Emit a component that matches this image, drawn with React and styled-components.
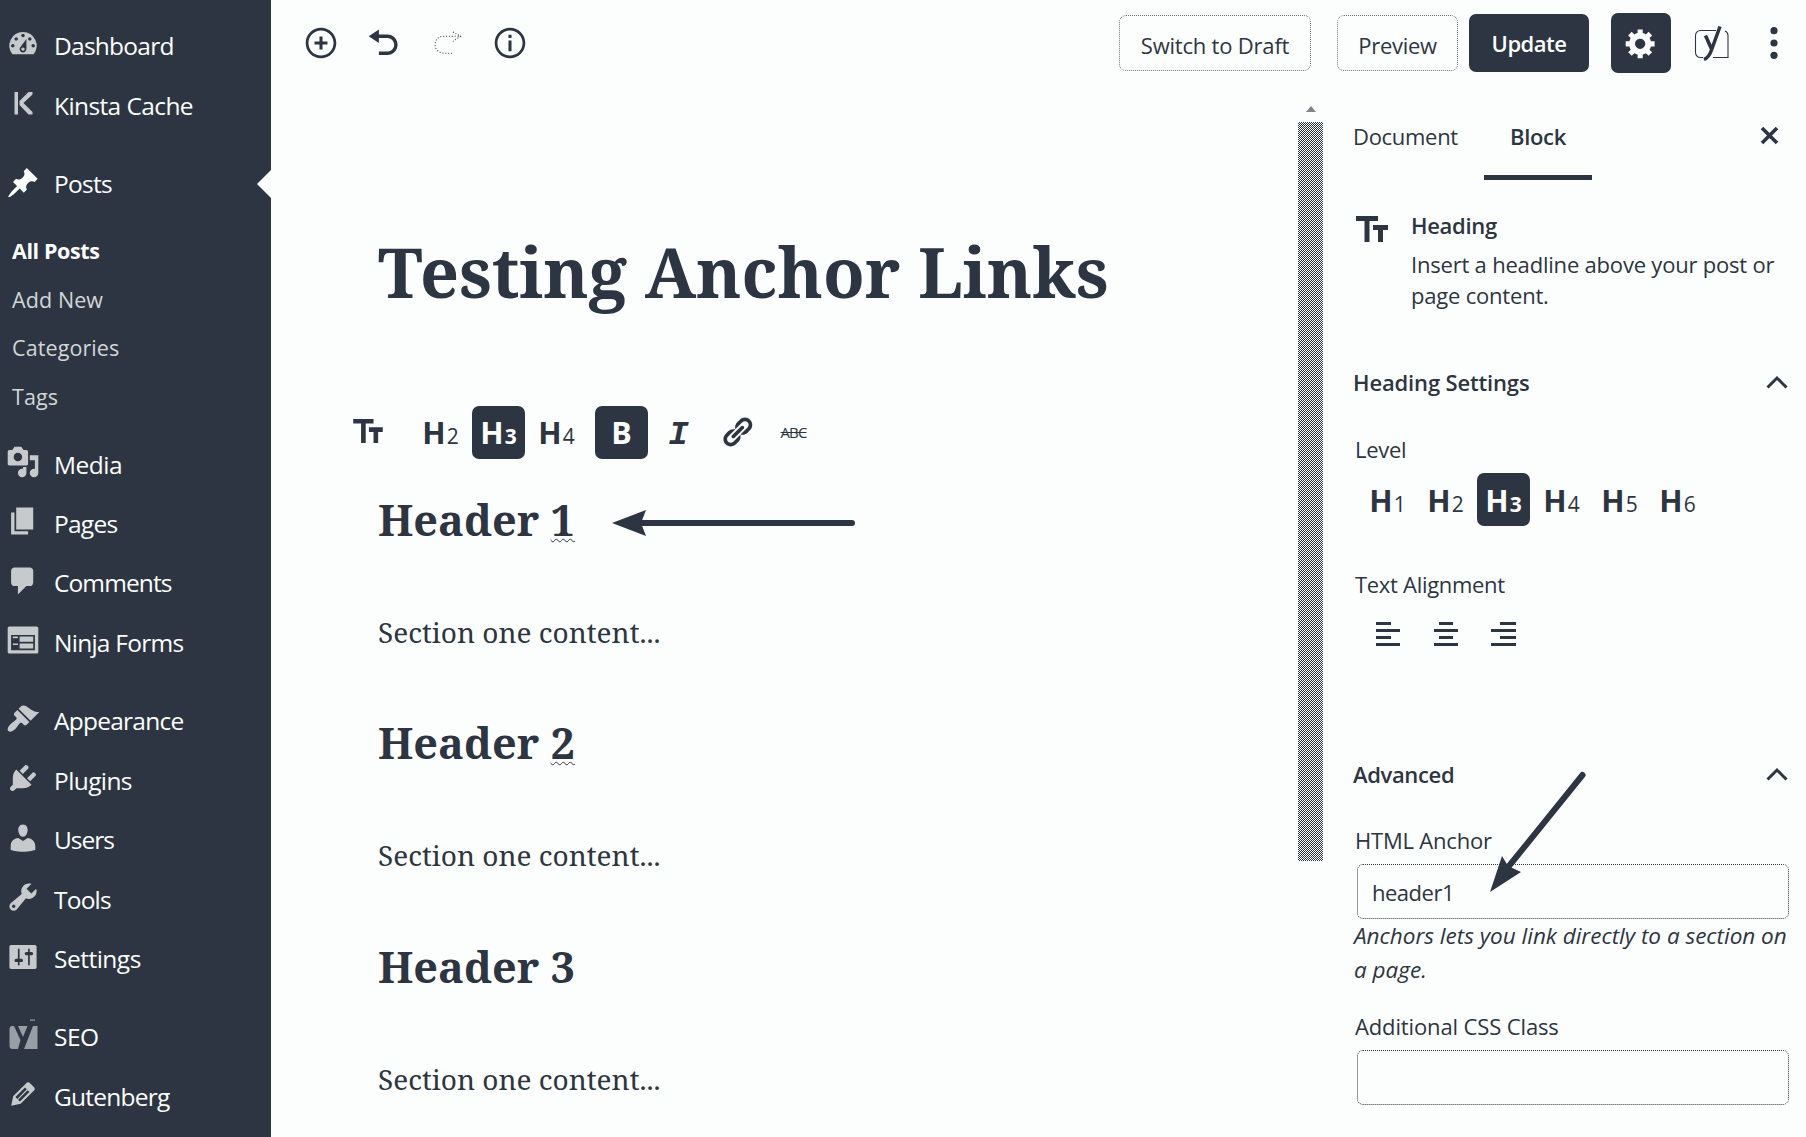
import React from "react";
import styled, { createGlobalStyle } from "styled-components";

const INK = "#2c3541";
const PAPER = "#fcfefd";
const SANS = `"Open Sans", "Noto Sans", sans-serif`;
const SERIF = `"Noto Serif", "Droid Serif", "DejaVu Serif Condensed", "DejaVu Serif", serif`;

const GlobalStyle = createGlobalStyle`
  * { box-sizing: border-box; }
  body { margin: 0; background: ${PAPER}; }
  button { font: inherit; color: inherit; background: none; border: 0; padding: 0; }
`;

const Page = styled.div`
  display: flex;
  width: 1806px;
  height: 1137px;
  overflow: hidden;
  position: relative;
  background: ${PAPER};
  color: ${INK};
  font-family: ${SANS};
`;

/* ---------- Admin menu ---------- */

const Sidebar = styled.nav`
  width: 271px;
  flex: none;
  padding-top: 16px;
  background: ${INK};
  color: ${PAPER};
`;

const MenuGroup = styled.div`
  margin-bottom: 19px;
`;

const MenuItem = styled.div`
  display: flex;
  align-items: center;
  height: 59.450px;
  padding-left: 5.5px;
  font-size: 24.5px;
  letter-spacing: ${(p) => p.$track ?? -0.75}px;
  white-space: nowrap;
`;

const MenuIcon = styled.svg`
  width: 34px;
  height: 34px;
  flex: none;
  margin: ${(p) => (p.$active ? -2 : -4)}px 14.5px 0 0;
  fill: ${(p) => (p.$active ? PAPER : p.$dim ? "#989ea5" : "#c6cacd")};
`;

const Pointer = styled.span`
  margin-left: auto;
  border: 14px solid transparent;
  border-left-width: 0;
  border-right-color: ${PAPER};
`;

const Submenu = styled.div`
  padding: 14px 0 13px;
`;

const SubItem = styled.div`
  height: 48.5px;
  line-height: 48.5px;
  padding-left: 12px;
  font-size: 21.5px;
  letter-spacing: ${(p) => (p.$current ? -0.4 : 0.1)}px;
  font-weight: ${(p) => (p.$current ? 700 : 400)};
  color: ${(p) => (p.$current ? PAPER : "#d3d6d9")};
`;

/* ---------- Top bar ---------- */

const Workspace = styled.div`
  flex: 1;
  display: flex;
  flex-direction: column;
  min-width: 0;
`;

const TopBar = styled.header`
  display: flex;
  align-items: center;
  height: 87px;
  padding: 0 22px 1px 32.5px;
`;

const Tools = styled.div`
  display: flex;
  gap: 29px;
  margin-right: auto;
`;

const ToolIcon = styled.svg`
  width: 34px;
  height: 34px;
  fill: ${(p) => (p.$faded ? "none" : INK)};
  stroke: ${(p) => (p.$faded ? INK : "none")};
`;

const BarButton = styled.button`
  width: ${(p) => p.$w}px;
  height: ${(p) => (p.$primary ? 58 : 56)}px;
  margin-right: ${(p) => p.$after}px;
  padding-top: ${(p) => (p.$primary ? 0 : 3)}px;
  border: ${(p) => (p.$primary ? "0" : `1px dotted #6d747d`)};
  border-radius: 7px;
  background: ${(p) => (p.$primary ? INK : "transparent")};
  color: ${(p) => (p.$primary ? PAPER : INK)};
  font-size: 22px;
  font-weight: ${(p) => (p.$primary ? 600 : 400)};
  letter-spacing: ${(p) => p.$track}px;
  white-space: nowrap;
`;

const GearButton = styled.button`
  display: grid;
  place-items: center;
  width: 60px;
  height: 60px;
  border-radius: 7px;
  background: ${INK};
  margin-right: 20px;
  svg { width: 34px; height: 34px; fill: ${PAPER}; }
`;

const MoreIcon = styled.svg`
  width: 20px;
  height: 34px;
  margin-left: 31px;
  fill: ${INK};
`;

/* ---------- Editor canvas ---------- */

const Body = styled.div`
  flex: 1;
  display: flex;
  min-height: 0;
`;

const Canvas = styled.main`
  width: 1027px;
  flex: none;
  padding: 135px 0 0 107px;
  font-family: ${SERIF};
`;

const Title = styled.h1`
  margin: 0;
  font-size: 68.200px;
  line-height: 100px;
  font-weight: 700;
  white-space: nowrap;
`;

const BlockToolbar = styled.div`
  display: flex;
  align-items: center;
  height: 52px;
  margin: 84px 0 32px -25px;
`;

const BlockType = styled.span`
  width: 61px;
  height: 27px;
`;

const ToggleBox = styled.span`
  display: flex;
  align-items: ${(p) => (p.$middle ? "center" : "baseline")};
  justify-content: center;
  gap: 1px;
  width: 53px;
  height: 53px;
  margin-right: ${(p) => p.$after ?? 5}px;
  border-radius: 7px;
  background: ${(p) => (p.$on ? INK : "transparent")};
  color: ${(p) => (p.$on ? PAPER : INK)};
  font-family: ${SANS};
  font-size: 30.5px;
  line-height: ${(p) => p.$line ?? 52}px;
  font-weight: 700;
`;

const LevelDigit = styled.span`
  font-size: 21px;
  font-weight: ${(p) => (p.$on ? 700 : 400)};
`;

const ItalicGlyph = styled.span`
  font-family: "Liberation Mono", monospace;
  font-style: italic;
  font-weight: 700;
  font-size: 34px;
  line-height: 58px;
`;

const StrikeGlyph = styled.span`
  font-size: 15px;
  font-weight: 400;
  letter-spacing: -0.9px;
  text-decoration: line-through;
`;

const Section = styled.section`
  height: 223.3px;
`;

const SectionHeading = styled.h3`
  margin: 0;
  height: 60px;
  font-size: 43.200px;
  line-height: 60px;
  font-weight: 700;
`;

const Misspelled = styled.span`
  text-decoration: ${(p) => (p.$on ? `underline wavy ${INK} 1px` : "none")};
  text-underline-offset: 2px;
  text-decoration-skip-ink: none;
`;

const Paragraph = styled.p`
  margin: 62px 0 0;
  font-size: 28px;
  line-height: 40px;
`;

const Scrollbar = styled.div`
  width: 25px;
  flex: none;
  display: flex;
  flex-direction: column;
  align-items: center;
  padding-top: 19px;
`;

const ScrollArrow = styled.span`
  border: 5px solid transparent;
  border-top-width: 0;
  border-bottom: 6px solid #7d848c;
`;

const ScrollThumb = styled.span`
  width: 25px;
  height: 739px;
  margin-top: 10px;
  background: conic-gradient(${INK} 25%, ${PAPER} 0 50%, ${INK} 0 75%, ${PAPER} 0) 0 0 / 2px 2px;
`;

/* ---------- Settings panel ---------- */

const Panel = styled.aside`
  flex: 1;
  padding: 0 17px 0 30px;
`;

const Tabs = styled.div`
  display: flex;
  height: 93px;
  font-size: 22px;
`;

const Tab = styled.span`
  width: ${(p) => p.$w}px;
  padding-top: 29px;
  line-height: 40px;
  text-align: ${(p) => (p.$active ? "center" : "left")};
  font-weight: ${(p) => (p.$active ? 600 : 400)};
  letter-spacing: -0.3px;
  border-bottom: ${(p) => (p.$active ? `5px solid ${INK}` : "0")};
`;

const CloseIcon = styled.svg`
  width: 19px;
  height: 19px;
  margin: 39px 10px 0 auto;
`;

const BlockCard = styled.div`
  display: flex;
  gap: 23px;
  padding: 29px 0 0 3px;
  height: 166px;
`;

const CardIcon = styled.div`
  padding-top: 7px;
`;

const CardName = styled.div`
  font-size: 22px;
  line-height: 32px;
  font-weight: 600;
  letter-spacing: -0.3px;
`;

const CardText = styled.div`
  margin-top: 8px;
  font-size: 22px;
  line-height: 31px;
  white-space: nowrap;
  letter-spacing: -0.2px;
`;

const SectionBar = styled.div`
  display: flex;
  align-items: center;
  justify-content: space-between;
  height: 40px;
  margin-top: ${(p) => p.$before}px;
  padding-right: 1px;
  font-size: 22px;
  font-weight: 600;
  letter-spacing: ${(p) => p.$track ?? -0.2}px;
`;

const FieldLabel = styled.div`
  margin: ${(p) => p.$before}px 0 0 2px;
  font-size: 22px;
  line-height: 30px;
  letter-spacing: ${(p) => p.$track ?? -0.3}px;
`;

const LevelRow = styled.div`
  display: flex;
  margin: 9px 0 0 8px;
`;

const AlignRow = styled.div`
  display: flex;
  gap: 32.5px;
  margin: 23px 0 0 23px;
`;

const TextField = styled.div`
  width: 432px;
  height: 55px;
  margin: ${(p) => p.$before}px 0 0 4px;
  padding-left: 14px;
  border: 1px dotted ${INK};
  border-radius: 6px;
  font-size: 22px;
  line-height: 54px;
  letter-spacing: -0.5px;
`;

const Hint = styled.div`
  margin-left: 1px;
  font-size: 22.5px;
  line-height: 34px;
  font-style: italic;
  white-space: nowrap;
`;

const Annotation = styled.svg`
  position: absolute;
  left: ${(p) => p.$x}px;
  top: ${(p) => p.$y}px;
  fill: ${INK};
  stroke: ${INK};
`;

const ICONS = {
  dashboard: "M3.76 16h12.48A7.998 7.998 0 0 0 10 3a7.998 7.998 0 0 0-6.24 13zM10 4c.55 0 1 .45 1 1s-.45 1-1 1-1-.45-1-1 .45-1 1-1zM6 6c.55 0 1 .45 1 1s-.45 1-1 1-1-.45-1-1 .45-1 1-1zm8 0c.55 0 1 .45 1 1s-.45 1-1 1-1-.45-1-1 .45-1 1-1zm-5.37 5.55L12 7v6c0 1.1-.9 2-2 2s-2-.9-2-2c0-.57.24-1.08.63-1.45zM4 10c.55 0 1 .45 1 1s-.45 1-1 1-1-.45-1-1 .45-1 1-1zm12 0c.55 0 1 .45 1 1s-.45 1-1 1-1-.45-1-1 .45-1 1-1zm-5 3c0-.55-.45-1-1-1s-1 .45-1 1 .45 1 1 1 1-.45 1-1z",
  pin: "M10.44 3.02l1.82-1.82 6.36 6.35-1.83 1.82c-1.05-.68-2.48-.57-3.41.36l-.75.75c-.92.93-1.04 2.35-.35 3.41l-1.83 1.82-2.41-2.41-2.8 2.79c-.42.42-3.38 2.71-3.8 2.29s1.86-3.39 2.28-3.81l2.79-2.79L4.1 9.36l1.83-1.82c1.05.69 2.48.57 3.4-.36l.75-.75c.93-.92 1.05-2.35.36-3.41z",
  media: "M13 11V4c0-.55-.45-1-1-1h-1.67L9 1H5L3.67 3H2c-.55 0-1 .45-1 1v7c0 .55.45 1 1 1h10c.55 0 1-.45 1-1zM7 4.5c1.38 0 2.5 1.12 2.5 2.5S8.38 9.5 7 9.5 4.5 8.38 4.5 7 5.62 4.5 7 4.5zM14 6h5v10.5c0 1.38-1.12 2.5-2.5 2.5S14 17.88 14 16.5s1.12-2.5 2.5-2.5c.17 0 .34.02.5.05V9h-3V6zm-4 8.05V13h2v3.5c0 1.38-1.12 2.5-2.5 2.5S7 17.88 7 16.5 8.12 14 9.5 14c.17 0 .34.02.5.05z",
  page: "M6 15V2h10v13H6zm-1 1h8v2H3V5h2v11z",
  comments: "M5 2h9c1.1 0 2 .9 2 2v7c0 1.1-.9 2-2 2h-2l-5 5v-5H5c-1.1 0-2-.9-2-2V4c0-1.1.9-2 2-2z",
  form: "M2 2h16c.55 0 1 .45 1 1v14c0 .55-.45 1-1 1H2c-.55 0-1-.45-1-1V3c0-.55.45-1 1-1zm15 14V7H3v9h14zM4 8v1h3V8H4zm4 0v3h8V8H8zm-4 4v1h3v-1H4zm4 0v3h8v-3H8z",
  brush: "M14.48 11.06L7.41 3.99l1.5-1.5c.5-.56 2.3-.47 3.51.32 1.21.8 1.43 1.28 2.91 2.1 1.18.64 2.45 1.26 4.45.85zm-.71.71L6.7 4.7 4.93 6.47c-.39.39-.39 1.02 0 1.41l1.06 1.06c.39.39.39 1.03 0 1.42-.6.6-1.43 1.11-2.21 1.69-.35.26-.7.53-1.01.84C1.43 14.23.4 16.08 1.4 17.07c.99 1 2.84-.03 4.18-1.36.31-.31.58-.66.85-1.02.57-.78 1.08-1.61 1.69-2.21.39-.39 1.02-.39 1.41 0l1.06 1.06c.39.39 1.02.39 1.41 0z",
  plug: "M13.11 4.36L9.87 7.6 8 5.73l3.24-3.24c.35-.34 1.05-.2 1.56.32.52.51.66 1.21.31 1.55zm-8 1.77l.91-1.12 9.01 9.01-1.19.84c-.71.71-2.63 1.16-3.82 1.16H6.14L4.9 17.26c-.59.59-1.54.59-2.12 0-.59-.58-.59-1.53 0-2.12l1.24-1.24v-3.88c0-1.13.4-3.19 1.09-3.89zm7.26 3.97l3.24-3.24c.34-.35 1.04-.21 1.55.31.52.51.66 1.21.31 1.55l-3.24 3.25z",
  user: "M10 9.25c-2.27 0-2.73-3.44-2.73-3.44C7 4.02 7.82 2 9.97 2c2.16 0 2.98 2.02 2.71 3.81 0 0-.41 3.44-2.68 3.44zm0 2.57L12.72 10c2.39 0 4.52 2.33 4.52 4.53v2.49s-3.65 1.13-7.24 1.13c-3.65 0-7.24-1.13-7.24-1.13v-2.49c0-2.25 1.94-4.48 4.47-4.48z",
  wrench: "M16.68 9.77c-1.34 1.34-3.3 1.67-4.95.99l-5.41 6.52c-.99.99-2.59.99-3.58 0s-.99-2.59 0-3.57l6.52-5.42c-.68-1.65-.35-3.61.99-4.95 1.28-1.28 3.12-1.62 4.72-1.06l-2.89 2.89 2.82 2.82 2.86-2.87c.53 1.58.18 3.39-1.08 4.65zM3.81 16.21c.4.39 1.04.39 1.43 0 .4-.4.4-1.04 0-1.43-.39-.4-1.03-.4-1.43 0-.39.39-.39 1.03 0 1.43z",
  sliders: "M18 16V4c0-.55-.45-1-1-1H3c-.55 0-1 .45-1 1v12c0 .55.45 1 1 1h14c.55 0 1-.45 1-1zM8 11h1c.55 0 1 .45 1 1s-.45 1-1 1H8v1.5c0 .28-.22.5-.5.5s-.5-.22-.5-.5V13H6c-.55 0-1-.45-1-1s.45-1 1-1h1V5.5c0-.28.22-.5.5-.5s.5.22.5.5V11zm5-2h-1c-.55 0-1-.45-1-1s.45-1 1-1h1V5.5c0-.28.22-.5.5-.5s.5.22.5.5V7h1c.55 0 1 .45 1 1s-.45 1-1 1h-1v5.5c0 .28-.22.5-.5.5s-.5-.22-.5-.5V9z",
  pencil: "M13.89 3.39l2.71 2.72c.46.46.42 1.24.03 1.64l-8.01 8.02-5.56 1.16 1.16-5.58s7.6-7.63 7.99-8.03c.39-.39 1.22-.39 1.68.07zm-2.73 2.79l-5.59 5.61 1.11 1.11 5.54-5.65zm-2.97 8.23l5.58-5.6-1.07-1.08-5.59 5.6z",
  insert: "M10 1c-5 0-9 4-9 9s4 9 9 9 9-4 9-9-4-9-9-9zm0 16.4c-4.1 0-7.4-3.3-7.4-7.4s3.3-7.4 7.4-7.4 7.4 3.3 7.4 7.4-3.3 7.4-7.4 7.4zm.9-11.2H9.1v2.9H6.2v1.8h2.9v2.9h1.8v-2.9h2.9V9.1h-2.9z",
  undo: "M12 5H7V2L1 6l6 4V7h5c2.2 0 4 1.8 4 4s-1.8 4-4 4H7v2h5c3.3 0 6-2.7 6-6s-2.7-6-6-6z",
  info: "M10 1c-5 0-9 4-9 9s4 9 9 9 9-4 9-9-4-9-9-9zm0 16.4c-4.1 0-7.4-3.3-7.4-7.4s3.3-7.4 7.4-7.4 7.4 3.3 7.4 7.4-3.3 7.4-7.4 7.4zM9.1 5.2h1.8V7H9.1zm0 3.3h1.8v6.3H9.1z",
  gear: "M18 12h-2.18c-.17.7-.44 1.35-.81 1.93l1.54 1.54-2.1 2.1-1.54-1.54c-.58.36-1.23.63-1.91.79V19H8v-2.18c-.68-.16-1.33-.43-1.91-.79l-1.54 1.54-2.12-2.12 1.54-1.54c-.36-.58-.63-1.23-.79-1.91H1V9.03h2.17c.16-.7.44-1.35.8-1.94L2.43 5.55l2.1-2.1 1.54 1.54c.58-.37 1.24-.64 1.93-.81V2h3v2.18c.68.16 1.33.43 1.91.79l1.54-1.54 2.12 2.12-1.54 1.54c.36.59.64 1.24.8 1.94H18V12zm-8.5 1.5c1.66 0 3-1.34 3-3s-1.34-3-3-3-3 1.34-3 3 1.34 3 3 3z",
  link: "M17.74 2.76c1.68 1.69 1.68 4.41 0 6.1l-1.53 1.52c-1.12 1.12-2.7 1.47-4.14 1.09l2.62-2.61.76-.77.76-.76c.84-.84.84-2.2 0-3.04-.84-.85-2.2-.85-3.04 0l-.77.76-3.38 3.38c-.37-1.44-.02-3.02 1.1-4.14l1.52-1.53c1.69-1.68 4.42-1.68 6.1 0zM8.59 13.43l5.34-5.34c.42-.42.42-1.1 0-1.52-.44-.43-1.13-.39-1.53 0l-5.33 5.34c-.42.42-.42 1.1 0 1.52.44.43 1.13.39 1.52 0zm-.76 2.29l4.14-4.15c.38 1.44.03 3.02-1.09 4.14l-1.52 1.53c-1.69 1.68-4.41 1.68-6.1 0-1.68-1.68-1.68-4.42 0-6.1l1.53-1.52c1.12-1.12 2.7-1.47 4.14-1.1l-4.14 4.15c-.85.84-.85 2.2 0 3.05.84.84 2.2.84 3.04 0z",
};

function MenuGlyph({ name, active }) {
  if (name === "kinsta") {
    return (
      <MenuIcon viewBox="0 0 34 34">
        <path d="M8.500 6h3.500v22.500H8.500zM22.500 6H26.500v2.500L17.500 17l9 9v2.500h-4L13.500 19v-4z" />
      </MenuIcon>
    );
  }
  if (name === "yoast") {
    return (
      <MenuIcon viewBox="0 0 34 34" $dim>
        <path d="M6.5 8H8l6.5 14L12 31H6.500a3 3 0 0 1-3-3V11a3 3 0 0 1 3-3zM12 8h9.500L17 19zM27 8h4.500v23H18z" />
        <path d="M24 1.500h5v1.200h-5z" />
      </MenuIcon>
    );
  }
  return (
    <MenuIcon viewBox="0 0 20 20" $active={active}>
      <path fillRule="evenodd" d={ICONS[name]} />
    </MenuIcon>
  );
}

const TypeIcon = ({ w = 32, h = 26 }) => (
  <svg width={w} height={h} viewBox="0 0 32 26" fill={INK}>
    <path d="M0 0h22v5h-8.5v21h-5V5H0z" />
    <path d="M17 9h15v5h-5v12h-5V14h-5z" />
  </svg>
);

const Chevron = () => (
  <svg width="22" height="16" viewBox="0 0 22 16" fill="none" stroke={INK} strokeWidth="3">
    <path d="M1.5 13.5L11 4l9.5 9.500" />
  </svg>
);

const ALIGN_BARS = {
  left: [[0, 15], [0, 24], [0, 15], [0, 24]],
  center: [[5, 14], [0, 24], [5, 14], [0, 24]],
  right: [[9, 16], [0, 25], [9, 16], [0, 25]],
};

const AlignIcon = ({ side }) => (
  <svg width="25" height="24" viewBox="0 0 25 24" fill={INK}>
    {ALIGN_BARS[side].map(([x, w], i) => (
      <rect key={i} x={x} y={i * 7} width={w} height="3" />
    ))}
  </svg>
);

const Level = ({ n, on, ...rest }) => (
  <ToggleBox $on={on} {...rest}>
    H<LevelDigit $on={on}>{n}</LevelDigit>
  </ToggleBox>
);

const MENU = [
  [
    { icon: "dashboard", label: "Dashboard" },
    { icon: "kinsta", label: "Kinsta Cache", track: -0.6 },
  ],
  [
    {
      icon: "pin",
      label: "Posts",
      active: true,
      children: ["All Posts", "Add New", "Categories", "Tags"],
    },
    { icon: "media", label: "Media", track: -0.5 },
    { icon: "page", label: "Pages" },
    { icon: "comments", label: "Comments", track: -0.9 },
    { icon: "form", label: "Ninja Forms" },
  ],
  [
    { icon: "brush", label: "Appearance" },
    { icon: "plug", label: "Plugins", track: -0.6 },
    { icon: "user", label: "Users", track: -1 },
    { icon: "wrench", label: "Tools", track: -0.8 },
    { icon: "sliders", label: "Settings", track: -0.5 },
  ],
  [
    { icon: "yoast", label: "SEO", track: -0.5 },
    { icon: "pencil", label: "Gutenberg" },
  ],
];

export default function App() {
  return (
    <>
      <GlobalStyle />
      <Page>
        <Sidebar>
          {MENU.map((group, g) => (
            <MenuGroup key={g}>
              {group.map((item) => (
                <React.Fragment key={item.label}>
                  <MenuItem $track={item.track}>
                    <MenuGlyph name={item.icon} active={item.active} />
                    {item.label}
                    {item.active && <Pointer />}
                  </MenuItem>
                  {item.children && (
                    <Submenu>
                      {item.children.map((label, i) => (
                        <SubItem key={label} $current={i === 0}>{label}</SubItem>
                      ))}
                    </Submenu>
                  )}
                </React.Fragment>
              ))}
            </MenuGroup>
          ))}
        </Sidebar>

        <Workspace>
          <TopBar>
            <Tools>
              <ToolIcon viewBox="0 0 20 20"><path fillRule="evenodd" d={ICONS.insert} /></ToolIcon>
              <ToolIcon viewBox="0 0 20 20"><path d={ICONS.undo} /></ToolIcon>
              <ToolIcon viewBox="0 0 20 20" $faded>
                <path d="M13 16H8.5C5.5 16 3 14 3 11s2-5 5-5h10M13.5 3.5L18 6l-4.5 3" strokeWidth=".6" strokeDasharray=".6 1.1" />
              </ToolIcon>
              <ToolIcon viewBox="0 0 20 20"><path fillRule="evenodd" d={ICONS.info} /></ToolIcon>
            </Tools>
            <BarButton $w={192} $after={26} $track={-0.2}>Switch to Draft</BarButton>
            <BarButton $w={121} $after={11} $track={-0.3}>Preview</BarButton>
            <BarButton $w={120} $after={22} $track={-0.5} $primary>Update</BarButton>
            <GearButton>
              <svg viewBox="0 0 20 20"><path d={ICONS.gear} /></svg>
            </GearButton>
            <svg width="42" height="42" viewBox="0 0 42 42" fill="none" stroke={INK}>
              <path d="M25 8.5H9.500A5 5 0 0 0 4.500 13.500v17a5 5 0 0 0 5 5H12M22 35.500h15V13.500a5 5 0 0 0-3-4.500" strokeWidth="1.100" />
              <path d="M14.500 13.500l6 13.500M29 4.500L20.500 28q-2.500 7.500-7.500 9.500" strokeWidth="3.500" />
            </svg>
            <MoreIcon viewBox="0 0 20 34">
              <circle cx="10" cy="4.7" r="3.6" />
              <circle cx="10" cy="17" r="3.6" />
              <circle cx="10" cy="29.3" r="3.6" />
            </MoreIcon>
          </TopBar>

          <Body>
            <Canvas>
              <Title>Testing Anchor Links</Title>
              <BlockToolbar>
                <BlockType><TypeIcon w={30} h={24} /></BlockType>
                <Level n={2} />
                <Level n={3} on />
                <Level n={4} $after={12} />
                <ToggleBox $on $after={4}>B</ToggleBox>
                <ToggleBox><ItalicGlyph>I</ItalicGlyph></ToggleBox>
                <ToggleBox $middle $after={4}>
                  <svg width="34" height="34" viewBox="0 0 20 20" fill={INK}><path d={ICONS.link} /></svg>
                </ToggleBox>
                <ToggleBox><StrikeGlyph>ABC</StrikeGlyph></ToggleBox>
              </BlockToolbar>
              {[1, 2, 3].map((n) => (
                <Section key={n}>
                  <SectionHeading>
                    Header <Misspelled $on={n < 3}>{n}</Misspelled>
                  </SectionHeading>
                  <Paragraph>Section one content...</Paragraph>
                </Section>
              ))}
            </Canvas>

            <Scrollbar>
              <ScrollArrow />
              <ScrollThumb />
            </Scrollbar>

            <Panel>
              <Tabs>
                <Tab $w={131}>Document</Tab>
                <Tab $w={108} $active>Block</Tab>
                <CloseIcon viewBox="0 0 19 19" stroke={INK} strokeWidth="3.6">
                  <path d="M2 2l15 15M17 2L2 17" />
                </CloseIcon>
              </Tabs>
              <BlockCard>
                <CardIcon><TypeIcon /></CardIcon>
                <div>
                  <CardName>Heading</CardName>
                  <CardText>
                    Insert a headline above your post or
                    <br />
                    page content.
                  </CardText>
                </div>
              </BlockCard>
              <SectionBar $before={16} $track={-0.15}>Heading Settings<Chevron /></SectionBar>
              <FieldLabel $before={32}>Level</FieldLabel>
              <LevelRow>
                {[1, 2, 3, 4, 5, 6].map((n) => (
                  <Level key={n} n={n} on={n === 3} $line={54} />
                ))}
              </LevelRow>
              <FieldLabel $before={43}>Text Alignment</FieldLabel>
              <AlignRow>
                <AlignIcon side="left" />
                <AlignIcon side="center" />
                <AlignIcon side="right" />
              </AlignRow>
              <SectionBar $before={108} $track={-0.35}>Advanced<Chevron /></SectionBar>
              <FieldLabel $before={31} $track={-0.2}>HTML Anchor</FieldLabel>
              <TextField $before={9}>header1</TextField>
              <Hint>
                Anchors lets you link directly to a section on
                <br />
                a page.
              </Hint>
              <FieldLabel $before={24} $track={-0.13}>Additional CSS Class</FieldLabel>
              <TextField $before={9} />
            </Panel>
          </Body>
        </Workspace>

        <Annotation $x={608} $y={505} width="252" height="36" viewBox="0 0 252 36">
          <path d="M33 18H244" strokeWidth="6" strokeLinecap="round" />
          <path d="M4 18L38 5l-5 13 5 13z" stroke="none" />
        </Annotation>
        <Annotation $x={1485} $y={765} width="105" height="130" viewBox="0 0 105 130">
          <path d="M97.5 10L24 101" strokeWidth="6" strokeLinecap="round" />
          <path d="M5 127L17 91l6 10 13 6z" stroke="none" />
        </Annotation>
      </Page>
    </>
  );
}
